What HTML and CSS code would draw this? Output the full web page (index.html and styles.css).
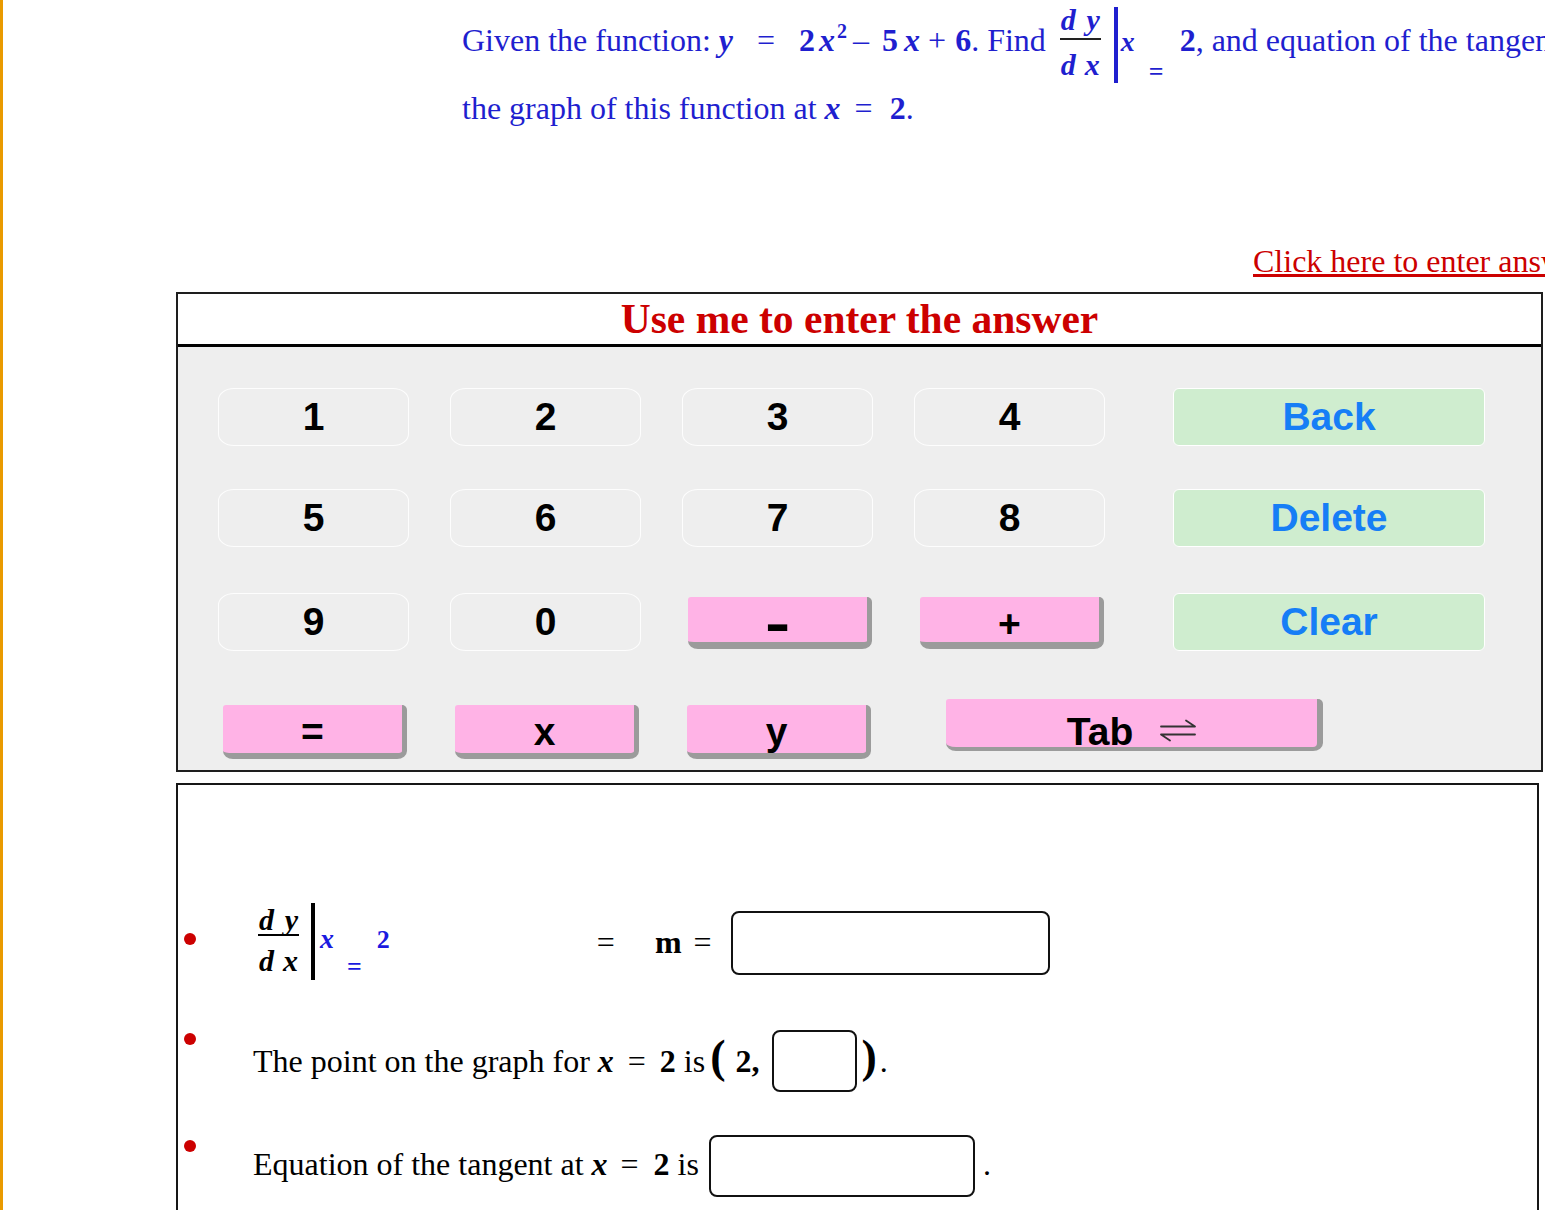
FILE: index.html
```html
<!DOCTYPE html>
<html lang="en">
<head>
<meta charset="utf-8">
<title>Derivative exercise</title>
<link rel="stylesheet" href="styles.css">
</head>
<body>
<div class="page">
  <div class="question">
    <div class="q1">Given the function: <b><i>y</i></b><span class="op">=</span><b>2</b><b class="mx"><i>x</i><sup>2</sup></b><span class="op2">–</span><b>5</b><b class="mx2"><i>x</i></b><span class="op3">+</span><b>6</b>. Find <span class="frac qf"><span class="num"><span>d</span><span>y</span></span><span class="den"><span>d</span><span>x</span></span></span><span class="bar qbar"></span><b class="subx"><i>x</i></b><b class="subeq">=</b><b class="two">2</b>, and equation of the tangent line to</div>
    <div class="q2">the graph of this function at <b><i>x</i></b><span class="op4">=</span><b>2</b>.</div>
  </div>

  <div class="linkrow"><a class="enter" href="#">Click here to enter answers</a></div>

  <div class="keypad">
    <div class="kp-title">Use me to enter the answer</div>
    <div class="kp-body">
      <div class="kp-row">
        <div class="key">1</div>
        <div class="key">2</div>
        <div class="key">3</div>
        <div class="key">4</div>
        <div class="key green">Back</div>
      </div>
      <div class="kp-row r2">
        <div class="key">5</div>
        <div class="key">6</div>
        <div class="key">7</div>
        <div class="key">8</div>
        <div class="key green">Delete</div>
      </div>
      <div class="kp-row r3">
        <div class="key">9</div>
        <div class="key">0</div>
        <div class="cell"><div class="pink p3"><span class="minus">–</span></div></div>
        <div class="cell"><div class="pink p3">+</div></div>
        <div class="key green">Clear</div>
      </div>
      <div class="kp-row r4">
        <div class="cell"><div class="pink p4">=</div></div>
        <div class="cell"><div class="pink p4">x</div></div>
        <div class="cell"><div class="pink p4">y</div></div>
        <div class="pink tab">Tab<svg class="arrows" width="36" height="23" viewBox="0 0 36 23"><path d="M1 7.5 H35 L26 1.5 M35 15.5 H1 L10 21.5" fill="none" stroke="#333" stroke-width="1.8" stroke-linejoin="round" stroke-linecap="round"/></svg></div>
      </div>
    </div>
  </div>

  <div class="answers">
    <div class="item it1">
      <span class="dot d1"></span>
      <div class="line l1"><span class="frac af"><span class="num"><span>d</span><span>y</span></span><span class="den"><span>d</span><span>x</span></span></span><span class="bar abar"></span><span class="bx">x</span><span class="beq">=</span><span class="b2">2</span><span class="mgrp"><span class="eq1">=</span><b class="m">m</b><span class="eq2">=</span></span><span class="ans a1"></span></div>
    </div>
    <div class="item it2">
      <span class="dot d2"></span>
      <div class="line l2">The point on the graph for <b><i>x</i></b><span class="eqm">=</span><b>2</b> is<span class="par lp">(</span><b class="p2">2,</b><span class="ans a2"></span><span class="par rp">)</span><span class="stop">.</span></div>
    </div>
    <div class="item it3">
      <span class="dot d3"></span>
      <div class="line l3">Equation of the tangent at <b><i>x</i></b><span class="eqm3">=</span><b>2</b> is<span class="ans a3"></span><span class="stop3">.</span></div>
    </div>
  </div>
</div>
</body>
</html>
```

FILE: styles.css
```css
* { box-sizing: border-box; }

html, body {
  margin: 0;
  padding: 0;
  height: 1210px;
  overflow: hidden;
  background: #ffffff;
}

body {
  border-left: 3px solid #e99a00;
  font-family: "Liberation Serif", "Times New Roman", serif;
  color: #000;
}

.page {
  width: 1542px;
  height: 1210px;
  overflow: hidden;
  display: flex;
  flex-direction: column;
  align-items: flex-start;
}
.page > * { flex: none; }

/* ---------- question ---------- */
.question {
  margin-left: 459px;
  color: #1f1fcf;
  font-size: 32px;
  white-space: nowrap;
}

.q1 { height: 82px; line-height: 80.4px; }
.q2 { height: 52.4px; line-height: 52.4px; }

.op { margin: 0 24px; }
.mx { margin-left: 4px; }
.mx sup { font-size: 20px; line-height: 0; vertical-align: 13px; margin-left: 2px; }
.op2 { margin: 0 13px 0 6px; }
.mx2 { margin-left: 6px; }
.op3 { margin: 0 9px 0 8px; }
.op4 { margin: 0 17px 0 14px; }

.frac {
  display: inline-flex;
  flex-direction: column;
  width: 41px;
  font-size: 30px;
  font-weight: bold;
  font-style: italic;
  line-height: 26px;
}
.frac .num,
.frac .den {
  display: flex;
  justify-content: space-between;
  padding-left: 1px;
  padding-right: 1px;
}
.qf { vertical-align: 21px; margin-left: 6px; }
.qf .num { padding-bottom: 5px; border-bottom: 2px solid #222; }
.qf .den { padding-top: 12px; }

.bar {
  display: inline-block;
  width: 4px;
  background: currentColor;
}
.qbar { height: 76px; vertical-align: -32px; margin-left: 13px; }

.subx { font-size: 28px; line-height: 1; margin-left: 3px; }
.subeq { font-size: 26px; line-height: 1; vertical-align: -29px; margin-left: 14px; }
.two { margin-left: 16px; }

/* ---------- link ---------- */
.linkrow {
  margin-top: 106.8px;
  margin-left: 1250px;
  height: 40px;
  line-height: 40px;
  font-size: 32px;
  white-space: nowrap;
}
.enter { color: #cc0000; text-decoration: underline; }

/* ---------- keypad ---------- */
.keypad {
  margin-top: 10.8px;
  margin-left: 173px;
  width: 1367px;
  border: 2px solid #1e1e1e;
}

.kp-title {
  height: 53px;
  line-height: 50px;
  border-bottom: 3px solid #000;
  background: #fff;
  text-align: center;
  color: #cc0000;
  font-weight: bold;
  font-size: 41.5px;
}

.kp-body {
  height: 423px;
  background: #eeeeee;
  padding: 41px 0 0 40px;
  display: flex;
  flex-direction: column;
  font-family: "Liberation Sans", Arial, sans-serif;
  font-weight: bold;
  font-size: 39px;
}

.kp-row { display: flex; gap: 41px; align-items: flex-start; }
.r2 { margin-top: 43px; }
.r3 { margin-top: 46px; }
.r4 { margin-top: 48px; }

.key {
  width: 191px;
  height: 58px;
  border: 1.5px solid #fdfdfd;
  border-radius: 16px / 12px;
  display: flex;
  align-items: center;
  justify-content: center;
  color: #000;
}
.key.green {
  width: 312px;
  margin-left: 27px;
  background: #cfedcf;
  color: #167ef6;
  border-radius: 6px;
  border-color: #ffffff;
}

.cell { width: 191px; }

.pink {
  background: #ffb3e6;
  border-right: 5px solid #9b9b9b;
  border-bottom: 7px solid #9b9b9b;
  border-radius: 3px 5px 10px 10px / 3px 5px 8px 8px;
  text-align: center;
  line-height: 39px;
  color: #000;
  margin-left: 6px;
  width: 184px;
}
.p3 { margin-top: 4px; height: 52px; padding-top: 7px; }
.p4 { margin-top: 6px; height: 54px; border-bottom-width: 6px; padding-top: 7px; margin-left: 5px; }

.minus { display: inline-block; transform: scaleY(1.7); }

.tab {
  margin-left: 32px;
  width: 377px;
  height: 52px;
  border-right-width: 6px;
  border-bottom-width: 4px;
  padding-top: 13px;
}
.arrows { margin-left: 27px; vertical-align: 3px; }

/* ---------- answers ---------- */
.answers {
  margin-top: 11px;
  margin-left: 173px;
  width: 1363px;
  height: 500px;
  border: 2px solid #161616;
  background: #fff;
  font-size: 32px;
}

.item { display: flex; align-items: flex-start; }
.it1 { margin-top: 110px; }
.it2 { margin-top: 40px; }
.it3 { margin-top: 22.6px; }

.dot {
  flex: none;
  width: 12px;
  height: 12px;
  border-radius: 50%;
  background: #cc0000;
  margin-left: 6px;
  margin-right: 57px;
}
.d1 { margin-top: 38px; }
.d2 { margin-top: 13px; }
.d3 { margin-top: 15px; }

.line { white-space: nowrap; }
.l1 { height: 85px; line-height: 84.4px; }
.l2 { height: 82.4px; line-height: 82.4px; }
.l3 { height: 78.4px; line-height: 78.4px; }

.af { vertical-align: 18px; margin-left: 5px; color: #000; }
.af .num { padding-bottom: 1px; border-bottom: 2px solid #000; }
.af .den { padding-top: 12px; }

.abar { height: 77px; vertical-align: -32px; margin-left: 12px; background: #000; }

.bx, .beq, .b2 { color: #1a1ae0; font-weight: bold; line-height: 1; }
.bx { font-style: italic; font-size: 28px; margin-left: 5px; }
.beq { font-size: 26px; vertical-align: -27px; margin-left: 13px; }
.b2 { font-size: 26px; margin-left: 15px; }

.mgrp { vertical-align: -5px; }
.eq1 { margin-left: 207px; }
.m { margin-left: 40px; }
.eq2 { margin-left: 12px; }

.ans {
  display: inline-block;
  border: 2px solid #111;
  border-radius: 8px;
  background: #fff;
}
.a1 { width: 319px; height: 64px; margin-left: 19px; vertical-align: -27px; }
.a2 { width: 85px; height: 62px; margin-left: 12px; vertical-align: -20px; }
.a3 { width: 266px; height: 62px; margin-left: 10px; vertical-align: -22px; }

.eqm { margin: 0 14px; }
.eqm3 { margin: 0 15px 0 13px; }

.par { font-size: 46px; font-weight: bold; line-height: 1; }
.lp { margin-left: 5px; }
.rp { margin-left: 5px; }
.p2 { margin-left: 10px; }
.stop { margin-left: 3px; }
.stop3 { margin-left: 8px; }
```
